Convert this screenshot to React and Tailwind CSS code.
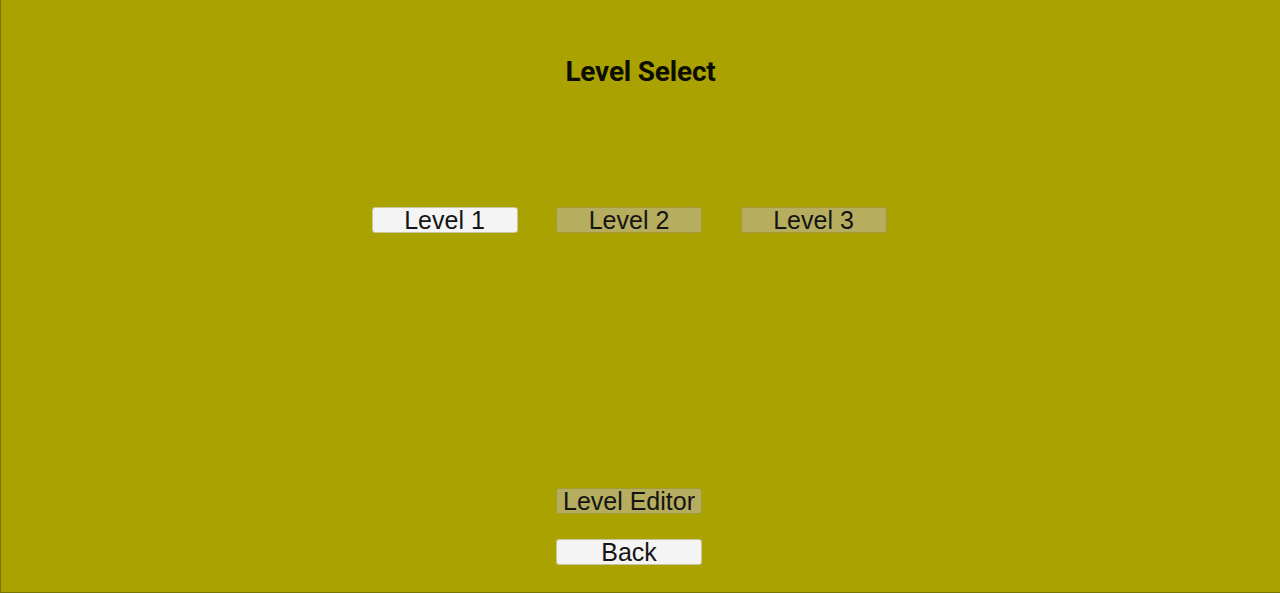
import React from "react";

function Btn({ label, disabled }) {
  return (
    <div
      className={
        "w-[146px] h-[26px] rounded-[3px] flex items-center justify-center text-[25px] leading-none text-[#141414] " +
        (disabled
          ? "bg-[#b6ae5e] border border-[#a29a3a]"
          : "bg-[#f4f4f4] border border-[#c9c59a]")
      }
      style={{ fontFamily: '"Liberation Sans", Arial, sans-serif' }}
    >
      <span className="pt-[1px]">{label}</span>
    </div>
  );
}

export default function App() {
  return (
    <div className="w-[1280px] h-[593px] bg-[#a9a200] border-l border-b border-[#7a7400] flex flex-col items-center overflow-hidden">
      <div
        className="mt-[56px] h-[32px] flex items-center text-[28px] font-bold text-[#0d0d00] tracking-[-0.2px]"
        style={{ fontFamily: 'Roboto, "Noto Sans", sans-serif' }}
      >
        Level Select
      </div>
      <div className="mt-[119px] flex gap-[38.5px] pr-[23px]">
        <Btn label="Level 1" />
        <Btn label="Level 2" disabled />
        <Btn label="Level 3" disabled />
      </div>
      <div className="mt-[255px] flex flex-col gap-[25px] pr-[23px]">
        <Btn label="Level Editor" disabled />
        <Btn label="Back" />
      </div>
    </div>
  );
}
